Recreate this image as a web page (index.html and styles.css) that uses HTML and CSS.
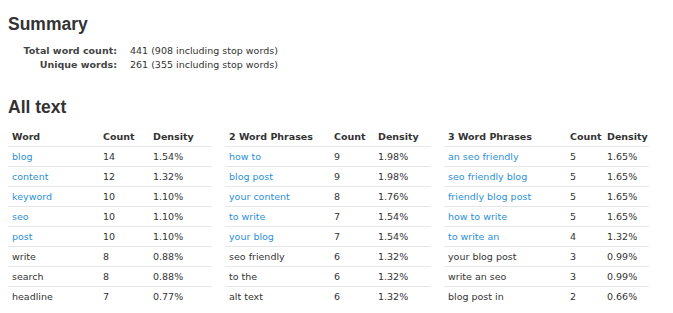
FILE: index.html
```html
<!DOCTYPE html>
<html>
<head>
<meta charset="utf-8">
<link rel="stylesheet" href="styles.css">
</head>
<body>
<h2 class="title">Summary</h2>
<div class="summary">
  <div class="srow"><span class="slabel">Total word count:</span><span class="sval">441 (908 including stop words)</span></div>
  <div class="srow"><span class="slabel">Unique words:</span><span class="sval">261 (355 including stop words)</span></div>
</div>
<h2 class="title title2">All text</h2>
<div class="tables">
  <table class="t t1">
    <colgroup><col class="c1"><col class="c2"><col></colgroup>
    <thead><tr><th>Word</th><th>Count</th><th>Density</th></tr></thead>
    <tbody>
      <tr><td><a>blog</a></td><td>14</td><td>1.54%</td></tr>
      <tr><td><a>content</a></td><td>12</td><td>1.32%</td></tr>
      <tr><td><a>keyword</a></td><td>10</td><td>1.10%</td></tr>
      <tr><td><a>seo</a></td><td>10</td><td>1.10%</td></tr>
      <tr><td><a>post</a></td><td>10</td><td>1.10%</td></tr>
      <tr><td>write</td><td>8</td><td>0.88%</td></tr>
      <tr><td>search</td><td>8</td><td>0.88%</td></tr>
      <tr><td>headline</td><td>7</td><td>0.77%</td></tr>
    </tbody>
  </table>
  <table class="t t2">
    <colgroup><col class="c1"><col class="c2"><col></colgroup>
    <thead><tr><th>2 Word Phrases</th><th>Count</th><th>Density</th></tr></thead>
    <tbody>
      <tr><td><a>how to</a></td><td>9</td><td>1.98%</td></tr>
      <tr><td><a>blog post</a></td><td>9</td><td>1.98%</td></tr>
      <tr><td><a>your content</a></td><td>8</td><td>1.76%</td></tr>
      <tr><td><a>to write</a></td><td>7</td><td>1.54%</td></tr>
      <tr><td><a>your blog</a></td><td>7</td><td>1.54%</td></tr>
      <tr><td>seo friendly</td><td>6</td><td>1.32%</td></tr>
      <tr><td>to the</td><td>6</td><td>1.32%</td></tr>
      <tr><td>alt text</td><td>6</td><td>1.32%</td></tr>
    </tbody>
  </table>
  <table class="t t3">
    <colgroup><col class="c1"><col class="c2"><col></colgroup>
    <thead><tr><th>3 Word Phrases</th><th>Count</th><th>Density</th></tr></thead>
    <tbody>
      <tr><td><a>an seo friendly</a></td><td>5</td><td>1.65%</td></tr>
      <tr><td><a>seo friendly blog</a></td><td>5</td><td>1.65%</td></tr>
      <tr><td><a>friendly blog post</a></td><td>5</td><td>1.65%</td></tr>
      <tr><td><a>how to write</a></td><td>5</td><td>1.65%</td></tr>
      <tr><td><a>to write an</a></td><td>4</td><td>1.32%</td></tr>
      <tr><td>your blog post</td><td>3</td><td>0.99%</td></tr>
      <tr><td>write an seo</td><td>3</td><td>0.99%</td></tr>
      <tr><td>blog post in</td><td>2</td><td>0.66%</td></tr>
    </tbody>
  </table>
</div>
</body>
</html>
```
FILE: styles.css
```css
html, body {
  margin: 0;
  padding: 0;
  background: #fff;
}
body {
  padding: 0 8px;
  font-family: "DejaVu Sans", Verdana, sans-serif;
  font-size: 9.5px;
  color: #333;
}
.title {
  margin: 0;
  padding-top: 13px;
  font-family: "Liberation Sans", Arial, sans-serif;
  font-size: 17.5px;
  line-height: 22px;
  font-weight: bold;
  color: #333;
}
.title2 {
  padding-top: 24px;
}
.summary {
  margin-top: 9px;
}
.srow {
  display: flex;
  line-height: 14px;
}
.slabel {
  width: 109px;
  text-align: right;
  font-weight: bold;
  color: #444;
}
.sval {
  margin-left: 13px;
}
.tables {
  display: flex;
  gap: 13px;
  margin-top: 9px;
}
.t {
  border-collapse: separate;
  border-spacing: 0;
  table-layout: fixed;
  width: 205px;
}
.t1 { width: 204px; }
.t2 { width: 206px; }
.t th, .t td {
  text-align: left;
  padding: 0 4px;
  line-height: 19px;
  white-space: nowrap;
  overflow: visible;
}
.t th {
  font-weight: bold;
  color: #333;
  border-bottom: 1px solid #e6e6e6;
}
.t tbody tr + tr td {
  border-top: 1px solid #e6e6e6;
}
.t a {
  color: #2b90d9;
}
.t1 .c1 { width: 91px; }
.t1 .c2 { width: 50px; }
.t2 .c1 { width: 105px; }
.t2 .c2 { width: 44px; }
.t3 .c1 { width: 122px; }
.t3 .c2 { width: 37px; }
```
